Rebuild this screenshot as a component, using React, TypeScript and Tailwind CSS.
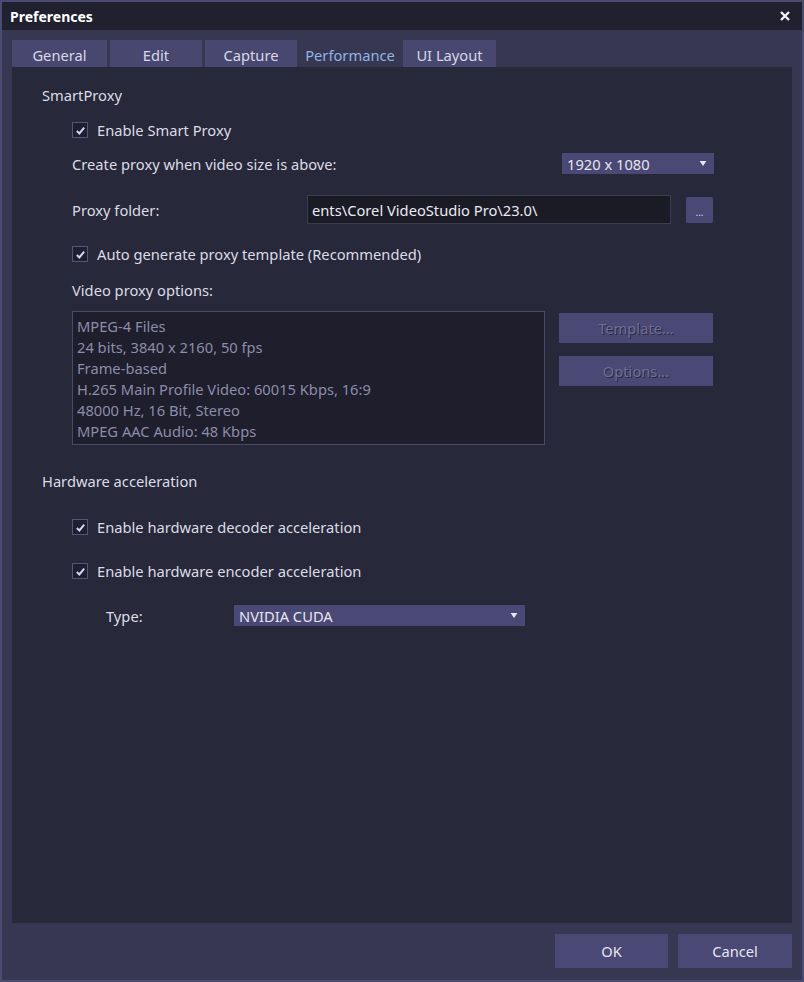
const tabs: { name: string; w: string }[] = [
  { name: 'General', w: 'w-[95px]' },
  { name: 'Edit', w: 'w-[92px]' },
  { name: 'Capture', w: 'w-[92px]' },
  { name: 'Performance', w: 'w-[100px]' },
  { name: 'UI Layout', w: 'w-[93px]' },
];

const proxyInfo = [
  'MPEG-4 Files',
  '24 bits, 3840 x 2160, 50 fps',
  'Frame-based',
  'H.265 Main Profile Video: 60015 Kbps, 16:9',
  '48000 Hz, 16 Bit, Stereo',
  'MPEG AAC Audio: 48 Kbps',
];

function Check({ label }: { label: string }) {
  return (
    <div className="flex items-center gap-[9px]">
      <span className="flex h-[16px] w-[16px] items-center justify-center border border-[#55557a] bg-[#1f1f30]">
        <svg viewBox="0 0 12 12" className="h-[11px] w-[11px]">
          <path d="M2 6.5 L4.8 9.2 L10 2.8" fill="none" stroke="#cdd8f2" strokeWidth="2.2" />
        </svg>
      </span>
      <span>{label}</span>
    </div>
  );
}

function Select({ value, className }: { value: string; className: string }) {
  return (
    <div className={`flex items-center justify-between bg-[#4a4874] pl-[5px] pr-[7px] text-[#e6e6f0] ${className}`}>
      <span>{value}</span>
      <svg viewBox="0 0 8 6" className="h-[5px] w-[8px]">
        <path d="M0 0 H8 L4 6 Z" fill="#e8e8f2" />
      </svg>
    </div>
  );
}

export default function App() {
  return (
    <div
      className="flex h-[982px] w-[804px] flex-col border-2 border-[#4b4a70] bg-[#383751] text-[14.7px] text-[#dcdce6]"
      style={{ fontFamily: '"Noto Sans", "Open Sans", sans-serif' }}
    >
      <div className="flex h-[28px] shrink-0 items-center justify-between bg-[#21202f] pl-[8px] pr-[12px]">
        <span className="text-[14px] font-bold text-white">Preferences</span>
        <svg viewBox="0 0 10 10" className="h-[10px] w-[10px]">
          <path d="M1 1 L9 9 M9 1 L1 9" stroke="#f2f2f8" strokeWidth="2.4" />
        </svg>
      </div>

      <div className="flex flex-1 flex-col px-[10px] pt-[10px]">
        <div className="flex h-[27px] gap-[3px]">
          {tabs.map((t) => (
            <div
              key={t.name}
              className={
                t.name === 'Performance'
                  ? `flex ${t.w} items-center justify-center pt-[3px] text-[#8fb4e6]`
                  : `flex ${t.w} items-center justify-center bg-[#48476f] pt-[3px] text-[#d8d8e6]`
              }
            >
              {t.name}
            </div>
          ))}
        </div>

        <div className="flex h-[856px] flex-col bg-[#272839] pl-[30px] pr-[78px] pt-[18px]">
          <div className="leading-[20px]">SmartProxy</div>

          <div className="flex flex-col pl-[30px]">
            <div className="mt-[15px] leading-[20px]">
              <Check label="Enable Smart Proxy" />
            </div>

            <div className="mt-[13px] flex items-center justify-between leading-[20px]">
              <span>Create proxy when video size is above:</span>
              <Select value="1920 x 1080" className="h-[21px] w-[152px]" />
            </div>

            <div className="mt-[21px] flex items-center leading-[20px]">
              <span className="w-[235px]">Proxy folder:</span>
              <div className="flex h-[29px] w-[364px] items-center overflow-hidden border border-[#3c3c50] bg-[#1b1b26] pl-[4px] text-[#eaeaf2]">
                ents\Corel VideoStudio Pro\23.0\
              </div>
              <div className="ml-[15px] flex h-[26px] w-[27px] items-end justify-center rounded-[2px] bg-[#4a4874] pb-[6px] text-[10px] leading-[10px] text-[#d8d8e6]">
                ...
              </div>
            </div>

            <div className="mt-[20px] leading-[20px]">
              <Check label="Auto generate proxy template (Recommended)" />
            </div>

            <div className="mt-[16px] leading-[20px]">Video proxy options:</div>

            <div className="mt-[11px] flex gap-[14px]">
              <div className="h-[134px] w-[473px] border border-[#4a4a64] bg-[#1e1e2c] px-[4px] pt-[4px] leading-[21px] text-[#8d8caa]">
                {proxyInfo.map((l) => (
                  <div key={l}>{l}</div>
                ))}
              </div>
              <div className="flex flex-col gap-[13px] pt-[2px]">
                {['Template...', 'Options...'].map((b) => (
                  <div
                    key={b}
                    className="flex h-[30px] w-[154px] items-center justify-center bg-[#4a4874] text-[#6f6d96] [text-shadow:1px_1px_0_#2a2940]"
                  >
                    {b}
                  </div>
                ))}
              </div>
            </div>
          </div>

          <div className="mt-[26px] leading-[20px]">Hardware acceleration</div>

          <div className="flex flex-col pl-[30px]">
            <div className="mt-[26px] leading-[20px]">
              <Check label="Enable hardware decoder acceleration" />
            </div>
            <div className="mt-[24px] leading-[20px]">
              <Check label="Enable hardware encoder acceleration" />
            </div>
            <div className="mt-[24px] flex items-center pl-[34px] leading-[20px]">
              <span className="w-[128px]">Type:</span>
              <Select value="NVIDIA CUDA" className="h-[21px] w-[291px]" />
            </div>
          </div>
        </div>

        <div className="flex justify-end gap-[10px] pt-[11px]">
          <div className="flex h-[34px] w-[113px] items-center justify-center bg-[#4a4874] text-[#e6e6f0]">OK</div>
          <div className="flex h-[34px] w-[114px] items-center justify-center bg-[#4a4874] text-[#e6e6f0]">Cancel</div>
        </div>
      </div>
    </div>
  );
}
